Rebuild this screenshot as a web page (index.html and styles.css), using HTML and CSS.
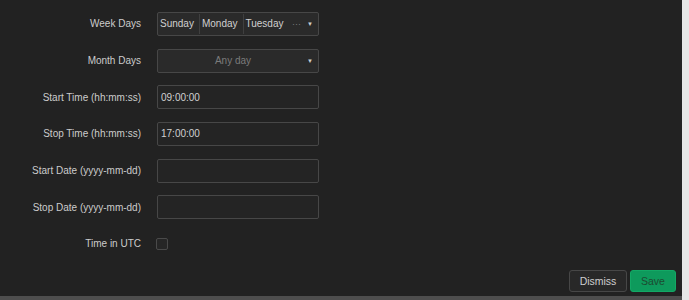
FILE: index.html
```html
<!DOCTYPE html>
<html>
<head>
<meta charset="utf-8">
<link rel="stylesheet" href="styles.css">
</head>
<body>
<div class="panel">
  <div class="form">
    <div class="row">
      <div class="label">Week Days</div>
      <div class="control select multi">
        <span class="chip">Sunday</span>
        <span class="chip">Monday</span>
        <span class="chip last">Tuesday</span>
        <span class="more">···</span>
        <span class="caret">▼</span>
      </div>
    </div>
    <div class="row">
      <div class="label">Month Days</div>
      <div class="control select single">
        <span class="placeholder">Any day</span>
        <span class="caret">▼</span>
      </div>
    </div>
    <div class="row">
      <div class="label">Start Time (hh:mm:ss)</div>
      <div class="control input">09:00:00</div>
    </div>
    <div class="row">
      <div class="label">Stop Time (hh:mm:ss)</div>
      <div class="control input">17:00:00</div>
    </div>
    <div class="row">
      <div class="label">Start Date (yyyy-mm-dd)</div>
      <div class="control input"></div>
    </div>
    <div class="row">
      <div class="label">Stop Date (yyyy-mm-dd)</div>
      <div class="control input"></div>
    </div>
    <div class="row">
      <div class="label">Time in UTC</div>
      <div class="checkbox"></div>
    </div>
  </div>
  <div class="footer">
    <button class="btn dismiss">Dismiss</button>
    <button class="btn save">Save</button>
  </div>
</div>
</body>
</html>
```
FILE: styles.css
```css
html, body {
  margin: 0;
  padding: 0;
}
body {
  background: #e6e6e6;
  font-family: "Liberation Sans", Arial, sans-serif;
  font-size: 10px;
  width: 689px;
  height: 300px;
  overflow: hidden;
}
.panel {
  width: 682px;
  height: 296px;
  background: #222222;
  border-bottom: 4px solid #4e4e4e;
  display: flex;
  flex-direction: column;
}
.form {
  padding-top: 12px;
  display: flex;
  flex-direction: column;
  gap: 13px;
}
.row {
  display: flex;
  align-items: center;
  height: 23.7px;
  gap: 16px;
}
.label {
  width: 141px;
  text-align: right;
  color: #cccccc;
  font-size: 10px;
}
.control {
  box-sizing: border-box;
  width: 162px;
  height: 24px;
  border: 1px solid #474747;
  border-radius: 2px;
  background: #242424;
  color: #d0d0d0;
  display: flex;
  align-items: center;
  font-size: 10px;
}
.select {
  background: #2a2a2a;
  position: relative;
}
.input {
  padding-left: 3px;
}
.multi {
  padding-left: 2px;
}
.chip {
  padding: 0 5px 0 0;
  height: 20px;
  line-height: 20px;
  border-right: 1px solid #3f3f3f;
  margin-right: 2px;
}
.chip.last {
  border-right: none;
}
.more {
  color: #7a7a7a;
  margin-left: auto;
  margin-right: 17px;
  font-size: 9px;
}
.caret {
  position: absolute;
  right: 5px;
  top: 50%;
  transform: translateY(-50%);
  font-size: 6px;
  color: #d0d0d0;
}
.single {
  justify-content: center;
}
.placeholder {
  color: #7b7b7b;
  margin-left: -10px;
}
.checkbox {
  box-sizing: border-box;
  width: 12px;
  height: 12px;
  border: 1px solid #4a4a4a;
  border-radius: 2px;
  background: #262626;
  margin-left: -1px;
}
.footer {
  margin-top: auto;
  display: flex;
  justify-content: flex-end;
  gap: 3px;
  padding: 0 6px 4px 0;
}
.btn {
  box-sizing: border-box;
  height: 22px;
  border-radius: 3px;
  font-family: "Liberation Sans", Arial, sans-serif;
  font-size: 10.5px;
  padding: 0;
  margin: 0;
}
.dismiss {
  width: 58px;
  background: #282828;
  border: 1px solid #474747;
  color: #cfcfcf;
}
.save {
  width: 46px;
  background: #0e9a5c;
  border: 1px solid #13a865;
  color: #1d4a31;
}
```
